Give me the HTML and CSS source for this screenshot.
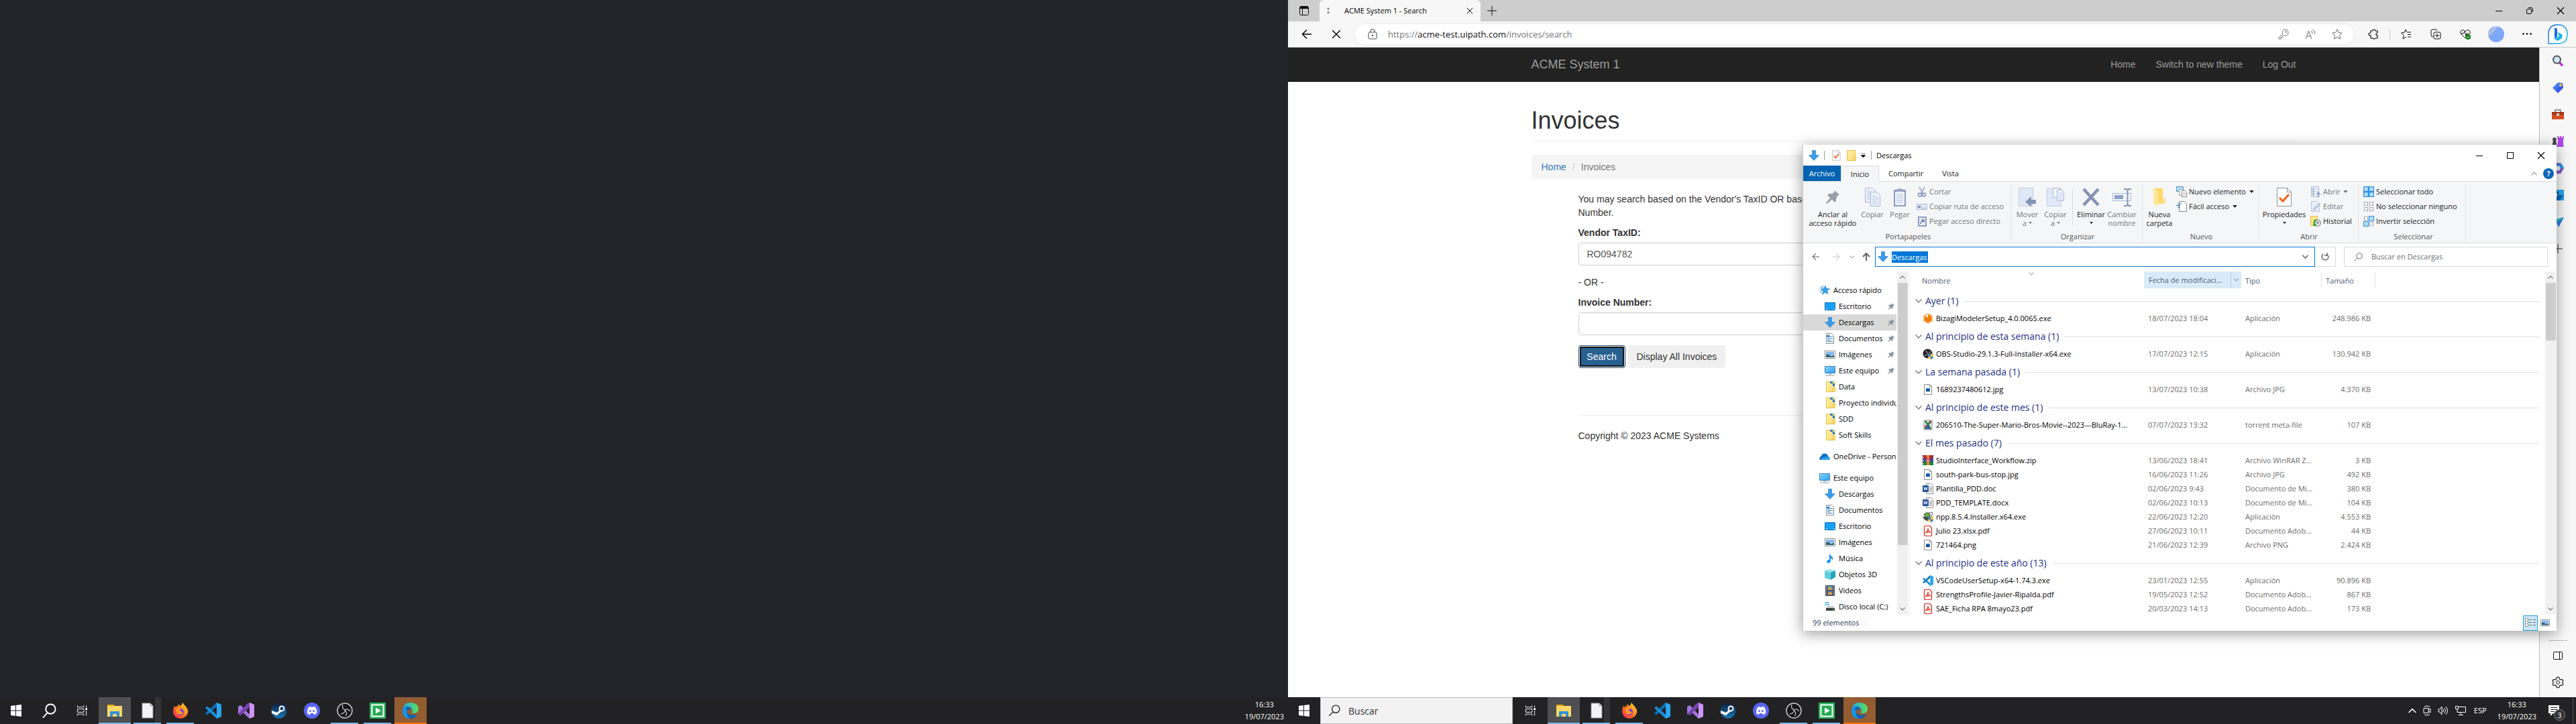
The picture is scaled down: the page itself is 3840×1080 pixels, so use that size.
FILE: index.html
```html
<!DOCTYPE html>
<html lang="es">
<head>
<meta charset="utf-8">
<title>ACME System 1 - Search</title>
<link rel="stylesheet" href="styles.css">
</head>
<body>
<svg class="sprite" width="0" height="0" aria-hidden="true">
  <defs>
    <linearGradient id="g-fox" x1="1" y1="0" x2="0" y2="1"><stop offset="0" stop-color="#ffe83d"/><stop offset=".5" stop-color="#ff7a1a"/><stop offset="1" stop-color="#f5186c"/></linearGradient>
    <linearGradient id="g-edge" x1="0" y1="0" x2="1" y2="0"><stop offset="0" stop-color="#1ba5e8"/><stop offset="1" stop-color="#5fe05a"/></linearGradient>
    <linearGradient id="g-steam" x1="0" y1="0" x2="0" y2="1"><stop offset="0" stop-color="#111d3c"/><stop offset="1" stop-color="#1479b8"/></linearGradient>
    <linearGradient id="g-bing" x1="0" y1="0" x2="1" y2="1"><stop offset="0" stop-color="#1a5fe0"/><stop offset="1" stop-color="#1fc8e8"/></linearGradient>
    <linearGradient id="g-folder" x1="0" y1="0" x2="1" y2="1"><stop offset="0" stop-color="#fff0a8"/><stop offset="1" stop-color="#ffdb72"/></linearGradient>
    <linearGradient id="g-screen" x1="0" y1="0" x2="1" y2="1"><stop offset="0" stop-color="#8ad8ff"/><stop offset="1" stop-color="#2b9bf0"/></linearGradient>
    <linearGradient id="g-tag" x1="0" y1="0" x2="1" y2="1"><stop offset="0" stop-color="#4fa8ff"/><stop offset="1" stop-color="#2f2be0"/></linearGradient>
  </defs>
  <symbol id="win" viewBox="0 0 16 20"><path fill="#fff" d="M0 3l7-1v7.500H0zM8 1.900L16 1v8.500H8zM0 10.500h7V18l-7-1zM8 10.500h8V19l-8-1z"/></symbol>
  <symbol id="search" viewBox="0 0 24 24"><g fill="none" stroke="currentColor" stroke-width="2"><circle cx="14" cy="9" r="7.500"/><path d="M9 15l-7 7.500"/></g></symbol>
  <symbol id="search-thin" viewBox="0 0 16 16"><g fill="none" stroke="currentColor" stroke-width="1.200"><circle cx="10" cy="6" r="5"/><path d="M6.500 9.500L1 15"/></g></symbol>
  <symbol id="taskview" viewBox="0 0 18 16"><g fill="none" stroke="#fff" stroke-width="1"><path d="M1.500 0v2.500h10V0M1.500 16v-2.500h10V16M1.500 5.500h10v5h-10zM15.500 0v3M15.500 8v8"/><path d="M14 4h3v3h-3z" fill="#fff" stroke="none"/></g></symbol>
  <symbol id="explorer" viewBox="0 0 24 24"><path d="M1 3h10l1 2v3H1z" fill="#e0a008"/><path d="M1 5h22v16H1z" fill="#ffd766"/><path d="M5 21v-7q0-1 1-1h12q1 0 1 1v7h-4v-4H9v4z" fill="#2f8fdc"/></symbol>
  <symbol id="doc" viewBox="0 0 24 24"><path d="M4 1h12l4 4v18H4z" fill="#f4f4f6" stroke="#999"/><path d="M16 1v4h4" fill="#ddd" stroke="#999"/></symbol>
  <symbol id="firefox" viewBox="0 0 24 24"><path fill="url(#g-fox)" d="M3 5l2 2q1-2 4-2l-1-3 4 3q2-1 3-5 2 3 5 6 4 5 3 9-2 8-11 9Q2 23 1 14q0-5 2-9z"/><circle cx="12" cy="14" r="5" fill="#7b3fe0"/><path d="M6 10q3-3 7-1-2 1-2 3l5 3q-3 4-8 2-4-3-2-7z" fill="#ff9a1f"/></symbol>
  <symbol id="vscode" viewBox="0 0 24 24"><path d="M17 0l7 3v18l-7 3z" fill="#2ba6ee"/><path d="M17 0v6L3 18.500 0 16z" fill="#0b70b7"/><path d="M17 24v-6L3 5.500 0 8z" fill="#168fd8"/></symbol>
  <symbol id="vs" viewBox="0 0 24 24"><path d="M0 6l4-2 14 15-1 5L4 12v6l-4-1z" fill="#a475dc"/><path d="M17 0v7L4 19l-4-2L13 2z" fill="#7443ab"/><path d="M17 0l7 3v18l-7 3z" fill="#cd95f8"/></symbol>
  <symbol id="steam" viewBox="0 0 24 24"><circle cx="12" cy="12" r="11.500" fill="url(#g-steam)"/><circle cx="16" cy="9" r="3.500" fill="none" stroke="#fff" stroke-width="2"/><path d="M1 12l8 3 4-4 3 2-5 4q-2 4-5 1l-5-2z" fill="#fff"/></symbol>
  <symbol id="discord" viewBox="0 0 24 24"><circle cx="12" cy="12" r="12" fill="#5865f2"/><path fill="#fff" d="M7 7q2-1 3-1l1 1h2l1-1q2 0 3 1 3 4 2 9-2 2-4 2l-1-2H10l-1 2q-2 0-4-2-.500-5 2-9z"/><circle cx="9.500" cy="12.500" r="1.500" fill="#5865f2"/><circle cx="14.500" cy="12.500" r="1.500" fill="#5865f2"/></symbol>
  <symbol id="obs" viewBox="0 0 24 24"><circle cx="12" cy="12" r="11" fill="#161618" stroke="#c8c8c8" stroke-width="1.500"/><g fill="none" stroke="#bbb" stroke-width="1.300"><path d="M9 3q-2 5 3 8 4-3 8 2"/><path d="M12 11q1 5-6 6"/><path d="M13 20q4-4-1-9"/></g></symbol>
  <symbol id="green" viewBox="0 0 24 24"><path d="M0 0h24v24H0z" fill="#27b35a"/><path d="M3.500 3.500h17v17h-17z" fill="#25a952" stroke="#fff" stroke-width="2"/><path d="M9 7.500l8 4.500-8 4.500z" fill="#fff"/></symbol>
  <symbol id="edge" viewBox="0 0 24 24"><path d="M0 12Q1 0 12 0q12 1 12 10-1 6-7 6-4 0-3-2 2-3-1-5-4-3-9 0z" fill="url(#g-edge)"/><path d="M0 12q1-6 7-6 5 0 7 4-5-2-7 3 0 8 15 5-4 6-10 6Q0 23 0 12z" fill="#0c62b8"/><path d="M7 13q-2 6 4 11Q0 24 0 12q1-5 7-6Q3 8 7 13z" fill="#1c93e0"/></symbol>

  <symbol id="down" viewBox="0 0 16 16"><path d="M5.500.500h5v7h5L8 15.500.500 7.500h5z" fill="#3a9bea" stroke="#1b77c4" stroke-width=".6"/></symbol>
  <symbol id="desk" viewBox="0 0 16 16"><path d="M.500 2.500h15v11H.500z" fill="#15a0f8" stroke="#0c6fb6"/><path d="M2 12h2M13 12h2" stroke="#fff"/></symbol>
  <symbol id="docs" viewBox="0 0 16 16"><path d="M2.500.500h8l3 3v12h-11z" fill="#fff" stroke="#8a8a8a"/><path d="M4 3h3v3H4zM8 5.500h4M4 8.500h8M4 10.500h4M4 12.500h8" fill="#2b8de0" stroke="#2b7fc4"/></symbol>
  <symbol id="img" viewBox="0 0 16 16"><path d="M.500 2.500h15v11H.500z" fill="#fff" stroke="#8a8a8a"/><path d="M2 4h12v5H2z" fill="#83b9ea"/><path d="M2 8q4-1 7 2l5-1v3H2z" fill="#2f6170"/></symbol>
  <symbol id="pc" viewBox="0 0 16 16"><path d="M.500 1.500h15v10H.500z" fill="url(#g-screen)" stroke="#3a88bd"/><path d="M6 13h4M1 15h14" stroke="#8d9aa5"/></symbol>
  <symbol id="fold" viewBox="0 0 16 16"><path d="M2.500.500h12v15h-12z" fill="url(#g-folder)" stroke="#e6be49"/><path d="M12.500 10h3v5.500h-3z" fill="#ffe588" stroke="#e6be49"/></symbol>
  <symbol id="foldlink" viewBox="0 0 16 16"><use href="#fold"/><path d="M8 0h4v3H8zM12 3h3v4h-3z" fill="#2979b9"/></symbol>
  <symbol id="quick" viewBox="0 0 16 16"><path d="M9 1l1.500 4.500 5 .2-4 3 1.500 5L9 11l-4.500 3L6 9 2 6l5-.3z" fill="#2ea3ee" stroke="#1472b8" stroke-width=".6"/><path d="M3 2h4M1 4h5M0 9h4M1 11h3" stroke="#3ba7e8"/></symbol>
  <symbol id="cloud" viewBox="0 0 16 16"><path d="M1 13q-2-3 2-6 2-5 7-3 3 1 3 4 4 1 2 5z" fill="#0f6cc8"/><path d="M3 13q0-4 5-4 5-2 8 2-1 2-3 2z" fill="#27a4ec"/></symbol>
  <symbol id="music" viewBox="0 0 16 16"><path d="M7 0q1 4 5 6 1 2-1 5 0-3-2-4v5q-1 3-4 3-3-1-1-4 1-1 3-1z" fill="#1592f2"/></symbol>
  <symbol id="cube" viewBox="0 0 16 16"><path d="M0 2l8-2 8 2-7 3z" fill="#9be7ee"/><path d="M0 2l9 3v11l-9-3z" fill="#5ed0dc"/><path d="M9 5l7-3v10l-7 4z" fill="#27a2b6"/></symbol>
  <symbol id="film" viewBox="0 0 16 16"><path d="M1 0h14v16H1z" fill="#444"/><path d="M4 1h8v6H4z" fill="#5b95d0"/><path d="M4 8h8v7H4z" fill="#4671a8"/><path d="M6 3h3l2 4H5zM6 10h4l1 4H5z" fill="#e4a437"/><path d="M2.500 0v16M13.500 0v16" stroke="#eee" stroke-dasharray="1 1"/></symbol>
  <symbol id="disk" viewBox="0 0 16 16"><path d="M1 1h2v2H1zM4 1h2v2H4zM1 4h2v2H1zM4 4h2v2H4z" fill="#1ba5f0"/><path d="M4 7h9l2 3H2z" fill="#c9ccd0"/><path d="M2 10h13v4H2z" fill="#3c4045"/><path d="M12 12h2" stroke="#5f5"/></symbol>
  <symbol id="pin" viewBox="0 0 16 16"><path d="M10 0l6 5-2 1-2 4v3l-2 1-3-3-6 5-1-1 5-6-3-3 1-2h4l3-2z" fill="currentColor"/></symbol>

  <symbol id="f-biz" viewBox="0 0 16 16"><path d="M8 0l7 4v8l-7 4-7-4V4z" fill="#f7b56b"/><path d="M8 2l5 3v6l-5 3-5-3V5z" fill="#f07d0d"/><path d="M4 4l4 3V2z" fill="#fff"/></symbol>
  <symbol id="shield" viewBox="0 0 8 8"><path d="M0 0h4v4H0z" fill="#3b82d0"/><path d="M4 0h4v4H4zM0 4h4v4Q0 7 0 4z" fill="#f5c332"/><path d="M4 4h4Q8 7 4 8z" fill="#3b82d0"/></symbol>
  <symbol id="f-obs" viewBox="0 0 16 16"><circle cx="7.500" cy="7.500" r="7" fill="#26262a"/><path d="M5 3q1 4 4 4M11 4q1 4-3 5M3 10q3 1 5-2" stroke="#bbb" fill="none"/><use href="#shield" x="8" y="8" width="8" height="8"/></symbol>
  <symbol id="f-img" viewBox="0 0 16 16"><path d="M2.500.500h8l3 3v12h-11z" fill="#fff" stroke="#8a8a8a"/><path d="M10.500.500v3h3" fill="none" stroke="#8a8a8a"/><path d="M5 6h6v5H5z" fill="#2773cd"/><path d="M5 9l3-1 3 3H5z" fill="#123e75"/></symbol>
  <symbol id="f-tor" viewBox="0 0 16 16"><path d="M2 1h12v14H2z" fill="#dce8d8" stroke="#888"/><path d="M4 2q4 5 8 12M12 2Q8 8 4 14" stroke="#19813a" stroke-width="2.500" fill="none"/><path d="M8 5l3 9H5z" fill="#315fc0"/><path d="M3 12l3-4M10 3l3 2" stroke="#d33" stroke-width="2"/></symbol>
  <symbol id="f-zip" viewBox="0 0 16 16"><path d="M0 0h16v5H0z" fill="#a72648"/><path d="M0 5h16v5H0z" fill="#3b4d9d"/><path d="M0 10h16v5H0z" fill="#168442"/><path d="M6 0h4v15H6z" fill="#e98a2c"/><path d="M5 5h6v5H5z" fill="#c03028"/><path d="M6.500 6v3h3V6" stroke="#fff" fill="none"/><path d="M1.500 2v2M1.500 7v2M1.500 12v2" stroke="#f3d648"/></symbol>
  <symbol id="f-doc" viewBox="0 0 16 16"><path d="M5.500.500h7l3 3v12h-10z" fill="#fff" stroke="#8a8a8a"/><path d="M10 5.500h4M10 7.500h4M10 9.500h4M10 11.500h4" stroke="#888"/><path d="M0 3h9v10H0z" fill="#2a569c"/><path d="M2 5.500L3.200 10 4.500 6l1.300 4L7 5.500" stroke="#fff" fill="none"/></symbol>
  <symbol id="f-npp" viewBox="0 0 16 16"><path d="M9 2l6-1-1 6H8z" fill="#eee" stroke="#777"/><path d="M2 5q3-5 8-2 2 4-1 5-4 3-7-3z" fill="#67b83f" stroke="#333"/><path d="M0 8q6-1 11 1l-3 5q-5 0-8-6z" fill="#4b4d49"/><use href="#shield" x="8" y="8" width="8" height="8"/></symbol>
  <symbol id="f-pdf" viewBox="0 0 16 16"><path d="M2.500 2q0-1.500 1.500-1.500h6.500l3 3V14q0 1.500-1.500 1.500H4q-1.500 0-1.500-1.500z" fill="#fff" stroke="#e1251b" stroke-width="1.200"/><path d="M8 4q0 4 4 6-4-1-8 1 4-2 4-7z" fill="none" stroke="#e1251b" stroke-width="1.200"/></symbol>

  <symbol id="r-copy" viewBox="0 0 28 28"><g fill="#eef3fb" stroke="#a9b8d4"><path d="M3.500.500h11l4 4v17h-15z"/><path d="M11.500 6.500h9l5 5v16h-14z"/></g><path d="M6 5h6M6 8h5M6 11h5M6 14h5M6 17h5M14 12h5M14 15h9M14 18h9M14 21h9M14 24h9" stroke="#b3c2dc"/></symbol>
  <symbol id="r-paste" viewBox="0 0 28 28"><path d="M5 3h18v25H5z" fill="#8a9cc0"/><path d="M7 6h14v20H7z" fill="#eef3fb"/><path d="M9 2h3q2-3 4 0h3v4H9z" fill="#9ba9c4"/><path d="M9 10h10M9 13h10M9 16h10M9 19h10M9 22h10" stroke="#b3c2dc"/></symbol>
  <symbol id="r-move" viewBox="0 0 28 28"><path d="M1.500.500h21v27h-21z" fill="#dfe8f6" stroke="#c2d0e6"/><path d="M20 13v5h7v6h-7v5l-9-8z" fill="#8494b6"/></symbol>
  <symbol id="r-copyto" viewBox="0 0 28 28"><path d="M1.500 1.500h21v26h-21z" fill="#dfe8f6" stroke="#c2d0e6"/><g fill="#f2f6fc" stroke="#a9b8d4"><path d="M10.500.500h10v14h-10z"/><path d="M16.500 3.500h7l3 3v13h-10z"/></g><path d="M18 8h7M18 11h7M18 14h7M18 17h7" stroke="#b3c2dc"/></symbol>
  <symbol id="r-del" viewBox="0 0 26 28"><path d="M2 2l22 24M24 2L2 26" stroke="#8193b5" stroke-width="4.500"/></symbol>
  <symbol id="r-ren" viewBox="0 0 28 28"><path d="M.500 8.500h27v11H.500z" fill="#f2f6fc" stroke="#a9b8d4"/><path d="M3 11h13v6H3z" fill="#8ea2c8"/><path d="M17 2h4l1.500 2L24 2h4M22.500 3v22M17 27h4l1.500-2 1.500 2h4" fill="none" stroke="#8193b5" stroke-width="2"/></symbol>
  <symbol id="r-fold" viewBox="0 0 24 28"><path d="M3 1h14v23H3z" fill="#ffd869"/><path d="M3 1l7 4v23l-7-4z" fill="#ffe799"/><path d="M16 16h5v8h-5z" fill="#ffe08a"/></symbol>
  <symbol id="r-prop" viewBox="0 0 24 28"><path d="M1.500.500h15l6 6v21h-21z" fill="#fff" stroke="#8f8f8f"/><path d="M16.500.500v6h6" fill="none" stroke="#8f8f8f"/><path d="M5 15l5 5 9-10" fill="none" stroke="#f26018" stroke-width="3"/></symbol>
  <symbol id="s-cut" viewBox="0 0 16 16"><path d="M4 1l5 9M12 1l-5 9" stroke="#a5b3cc" stroke-width="2"/><g fill="none" stroke="#7f92b5" stroke-width="1.500"><circle cx="5" cy="12.500" r="2.500"/><circle cx="11" cy="12.500" r="2.500"/></g></symbol>
  <symbol id="s-path" viewBox="0 0 16 16"><path d="M.500 4.500h15v8H.500z" fill="#dfe8f6" stroke="#a9b8d4"/><path d="M2 7l1 3 1-3 1 3 1-3M8 10.500h1M10 10.500h1M12 10.500h1" stroke="#6b7fa6" fill="none"/></symbol>
  <symbol id="s-link" viewBox="0 0 16 16"><path d="M2 1h13v15H2z" fill="#8a9cc0"/><path d="M4 3h9v11H4z" fill="#eef3fb"/><path d="M6 12q0-4 4-4M7 6h4v4" stroke="#5f76a5" stroke-width="1.500" fill="none"/></symbol>
  <symbol id="s-new" viewBox="0 0 16 16"><path d="M.500.500h10v7H.500z" fill="#b8e1f8" stroke="#4b8fbe"/><path d="M4.500 4.500h6v9h-6z" fill="#fff" stroke="#999"/><path d="M8.500 6.500h5l2 2v7h-7z" fill="#fff" stroke="#888"/><path d="M10 10h4M10 12h4" stroke="#d59b95"/></symbol>
  <symbol id="s-easy" viewBox="0 0 16 16"><path d="M4.500.500h8l3 3v12h-11z" fill="#fff" stroke="#888"/><path d="M2 4h6M0 6.500h6M2 9h4" stroke="#2b6ca3" stroke-width="1.200"/></symbol>
  <symbol id="s-open" viewBox="0 0 16 16"><path d="M1.500.500h11v15h-11z" fill="#f2f6fc" stroke="#a9b8d4"/><path d="M3 3h3v2H3zM3 7h3v2H3zM3 11h3v2H3zM8 4h3M8 8h3" fill="#a5b6d6" stroke="#a5b6d6"/><path d="M11 16v-4H8l4-4 4 4h-3v4z" fill="#8f9fc0"/></symbol>
  <symbol id="s-edit" viewBox="0 0 16 16"><path d="M1.500.500h8l4 4v11h-12z" fill="#e7eef9" stroke="#b6c4dc"/><path d="M15 4l-9 9-2 1 1-3 9-8z" fill="#c9d5ea" stroke="#a4b4d2"/></symbol>
  <symbol id="s-hist" viewBox="0 0 16 16"><path d="M.500.500h10v14H.500z" fill="#ffe588" stroke="#e6be49"/><circle cx="10.500" cy="10.500" r="5" fill="#ddd" stroke="#777"/><path d="M10 8v3l3-1" stroke="#555" fill="none"/><path d="M8 5q-5 2-3 8l-2 0 4 3 2-4-2 0q-1-3 2-5z" fill="#27a43b"/></symbol>
  <symbol id="s-all" viewBox="0 0 16 16"><path d="M.500.500h7v7h-7zM8.500.500h7v7h-7zM.500 8.500h7v7h-7zM8.500 8.500h7v7h-7z" fill="#b5dfff" stroke="#2c93dd" stroke-width="1.500"/></symbol>
  <symbol id="s-none" viewBox="0 0 16 16"><path d="M1.500 1.500h5v5h-5zM9.500 1.500h5v5h-5zM1.500 9.500h5v5h-5zM9.500 9.500h5v5h-5z" fill="#fff" stroke="#aaa" stroke-width="1.200"/></symbol>
  <symbol id="s-inv" viewBox="0 0 16 16"><path d="M1.500 1.500h5v5h-5zM9.500 9.500h5v5h-5z" fill="#fff" stroke="#aaa" stroke-width="1.200"/><path d="M8.500.500h7v7h-7zM.500 8.500h7v7h-7z" fill="#b5dfff" stroke="#2c93dd" stroke-width="1.200"/></symbol>

  <symbol id="chev" viewBox="0 0 10 6"><path d="M.500.500L5 5 9.500.500" fill="none" stroke="currentColor" stroke-width="1.300"/></symbol>
  <symbol id="chevup" viewBox="0 0 10 6"><path d="M.500 5.500L5 1l4.500 4.500" fill="none" stroke="currentColor" stroke-width="1.300"/></symbol>
  <symbol id="tri" viewBox="0 0 5 3"><path d="M0 0h5L2.500 3z" fill="currentColor"/></symbol>
  <symbol id="x" viewBox="0 0 12 12"><path d="M1 1l10 10M11 1L1 11" stroke="currentColor" stroke-width="1.200"/></symbol>
  <symbol id="arrow" viewBox="0 0 16 16"><path d="M15 8H2M8 1.500L1.500 8 8 14.500" fill="none" stroke="currentColor" stroke-width="1.500"/></symbol>
  <symbol id="star" viewBox="0 0 16 16"><path d="M8 .800l2.200 4.700 5 .7-3.600 3.600.900 5.200L8 12.500 3.500 15l.900-5.200L.800 6.200l5-.7z" fill="none" stroke="currentColor"/></symbol>
</svg>

<div class="screens">
  <section class="screen screen-left">
    <div class="wallpaper"></div>
    <footer class="taskbar">
      <nav class="apps" aria-label="Barra de tareas secundaria">
        <button class="task start" aria-label="Inicio"><svg><use href="#win"/></svg></button>
        <button class="task find" aria-label="Buscar"><svg><use href="#search"/></svg></button>
        <button class="task view" aria-label="Vista de tareas"><svg><use href="#taskview"/></svg></button>
        <button class="task on" aria-label="Explorador"><svg><use href="#explorer"/></svg></button>
        <button class="task run many" aria-label="Documento"><svg><use href="#doc"/></svg></button>
        <button class="task run" aria-label="Firefox"><svg><use href="#firefox"/></svg></button>
        <button class="task" aria-label="Visual Studio Code"><svg><use href="#vscode"/></svg></button>
        <button class="task" aria-label="Visual Studio"><svg><use href="#vs"/></svg></button>
        <button class="task" aria-label="Steam"><svg><use href="#steam"/></svg></button>
        <button class="task" aria-label="Discord"><svg><use href="#discord"/></svg></button>
        <button class="task run" aria-label="OBS Studio"><svg><use href="#obs"/></svg></button>
        <button class="task run" aria-label="Grabadora"><svg><use href="#green"/></svg></button>
        <button class="task alert" aria-label="Edge"><svg><use href="#edge"/></svg></button>
      </nav>
      <div class="tray tray-left"><div class="clock"><span>16:33</span><span>19/07/2023</span></div></div>
    </footer>
  </section>

  <section class="screen">
    <div class="browser">
      <header class="tabstrip">
        <button class="tabmenu" aria-label="Menú de pestañas"><svg width="14" height="14" viewBox="0 0 14 14"><rect x=".5" y=".5" width="13" height="13" rx="2" fill="none" stroke="#111"/><path d="M1 1h12v3H1z"/><path d="M4.500 4v9" stroke="#111"/></svg></button>
        <div class="tab"><svg class="loading" width="4" height="10" viewBox="0 0 4 10"><circle cx="2" cy="2" r="1.500" fill="#777"/><circle cx="2" cy="7.500" r="1.500" fill="#777"/></svg><span class="tabname">ACME System 1 - Search</span><button aria-label="Cerrar pestaña"><svg width="10" height="10"><use href="#x"/></svg></button></div>
        <button class="newtab" aria-label="Nueva pestaña"><svg width="14" height="14" viewBox="0 0 14 14"><path d="M7 0v14M0 7h14" stroke="#111"/></svg></button>
        <div class="wincontrols">
          <button aria-label="Minimizar"><svg width="10" height="10" viewBox="0 0 10 10"><path d="M0 5.500h10" stroke="#000"/></svg></button>
          <button aria-label="Restaurar"><svg width="10" height="10" viewBox="0 0 10 10"><rect x=".5" y="2.500" width="7" height="7" rx="1.500" fill="none" stroke="#000"/><path d="M3 .5h4q2.500 0 2.500 2.500v4" fill="none" stroke="#000"/></svg></button>
          <button aria-label="Cerrar"><svg width="12" height="12"><use href="#x"/></svg></button>
        </div>
      </header>
      <div class="toolbar">
        <button class="navbtn" aria-label="Atrás"><svg width="18" height="16"><use href="#arrow"/></svg></button>
        <button class="navbtn" aria-label="Detener"><svg width="14" height="14"><use href="#x"/></svg></button>
        <div class="omnibox">
          <svg width="14" height="16" viewBox="0 0 14 16"><rect x="1" y="5" width="12" height="10" rx="1.500" fill="none" stroke="#444"/><path d="M4 5V3q0-2.500 3-2.500T10 3v2" fill="none" stroke="#444"/><circle cx="7" cy="10" r="1"/></svg>
          <span class="url">https://<b>acme-test.uipath.com</b>/invoices/search</span>
          <span class="omniicons">
            <svg width="16" height="16" viewBox="0 0 16 16"><g fill="none" stroke="#777"><path d="M7 8L1 13v2h3v-2h2v-2h2l1-1q6 1 6-4Q15 1 10 1 5 2 7 8z"/><circle cx="11.500" cy="4.500" r="1"/></g></svg>
            <svg width="16" height="16" viewBox="0 0 16 16"><path d="M1 15L5.500 3 10 15M3 11h5M9 3q2 1 2 4M11 1q4 2 4 7" fill="none" stroke="#666"/></svg>
            <svg width="16" height="16" class="grey"><use href="#star"/></svg>
          </span>
        </div>
        <div class="actions">
          <svg width="16" height="16" viewBox="0 0 16 16"><path d="M4 3h3q0-2 2-2t2 2h3v3q-2 0-2 2t2 2v4h-3q0 1-2 1t-2-1H4v-4q-3 0-3-2t3-2z" fill="none" stroke="#111" stroke-width="1.200"/></svg>
          <i></i>
          <svg width="16" height="16" viewBox="0 0 16 16"><path d="M9 5h6M10 8.500h5M10 12h5M8.500 5L7 1 5 5.500.500 6 4 9.500 3 15l5-3" fill="none" stroke="#111"/></svg>
          <svg width="16" height="16" viewBox="0 0 16 16"><path d="M4 12Q1 12 1 9V3q0-2 2-2h5q2 0 2 2" fill="none" stroke="#111"/><rect x="5" y="5" width="10" height="10" rx="2" fill="none" stroke="#111"/><path d="M10 7v6M7 10h6" stroke="#111"/></svg>
          <svg width="16" height="16" viewBox="0 0 16 16"><path d="M8 14L2 8q-3-4 1-6 3-1 5 2 2-3 5-2 4 2 1 6M1 7h4l2-3 2 6 1-3h3" fill="none" stroke="#111"/><circle cx="12" cy="12" r="4" fill="#107c10"/><path d="M10 12l1.500 1.500L14 11" stroke="#fff" fill="none"/></svg>
          <span class="avatar"></span>
          <svg width="16" height="16" viewBox="0 0 16 16"><circle cx="2.500" cy="7.500" r="1.300"/><circle cx="8" cy="7.500" r="1.300"/><circle cx="13.500" cy="7.500" r="1.300"/></svg>
        </div>
        <div class="bing"><svg width="30" height="30" viewBox="0 0 30 30"><path d="M1 29V15Q1 1 15 1t14 14-14 14z" fill="#fff" stroke="url(#g-bing)" stroke-width="1.500"/><path d="M10 5l4 2v12l-4 3z" fill="#1b6ae6"/><path d="M14 12l7 3q2 5-3 8l-4 2-4-3 7-4z" fill="#1db5e6"/></svg></div>
      </div>
      <div class="viewport">
        <main class="page">
          <nav class="navbar">
            <div class="container">
              <a class="brand" href="#">ACME System 1</a>
              <div class="navlinks"><a href="#">Home</a><a href="#">Switch to new theme</a><a href="#">Log Out</a></div>
            </div>
          </nav>
          <div class="container body">
            <h1>Invoices</h1>
            <ol class="crumbs"><li><a href="#">Home</a></li><li>Invoices</li></ol>
            <form class="form">
              <p>You may search based on the Vendor's TaxID OR based on the Invoice Number.</p>
              <label for="tax">Vendor TaxID:</label>
              <input id="tax" type="text" value="RO094782">
              <p class="or">- OR -</p>
              <label for="inv">Invoice Number:</label>
              <input id="inv" type="text">
              <div class="btns"><button type="button" class="primary">Search</button><button type="button" class="plain">Display All Invoices</button></div>
              <hr>
              <p>Copyright © 2023 ACME Systems</p>
            </form>
          </div>
        </main>
        <aside class="sidebar">
          <svg viewBox="0 0 18 18"><path d="M11 11l5 5" stroke="#c02be0" stroke-width="3.500"/><circle cx="7.500" cy="7" r="5.500" fill="#cfeaf8" stroke="#555" stroke-width="2"/></svg>
          <svg viewBox="0 0 18 18"><path d="M1 9l8-8 7 1 1 7-8 8z" fill="url(#g-tag)"/><circle cx="13" cy="5" r="2" fill="#ffc928"/></svg>
          <svg viewBox="0 0 18 18"><path d="M5 5V2h8v3" fill="none" stroke="#777" stroke-width="1.500"/><path d="M0 5h18v11H0z" fill="#d24d20"/><path d="M0 5h18v4H0z" fill="#a63313"/><path d="M7 7h4v4H7z" fill="#ccc"/></svg>
          <svg viewBox="0 0 18 18"><circle cx="4" cy="6" r="3" fill="#555"/><path d="M2 8h4l2 9H0z" fill="#444"/><path d="M8 1h2v2h2V1h2v2h2V1h2l-1 7v5l1 4H8l1-9z" fill="#b146f0"/></svg>
          <svg viewBox="0 0 18 18"><path d="M5 1h8l5 8-5 8H5L0 9z" fill="#8557c4"/><path d="M10 1l5 2 3 6h-6L8 5z" fill="#2895e8"/><circle cx="9" cy="9" r="3.500" fill="#f4f4fa"/></svg>
          <svg viewBox="0 0 18 18"><path d="M5 1h13v16H5z" fill="#28a8ea"/><path d="M5 9h13l-6 8H5z" fill="#1166b8"/><path d="M0 4h10v10H0z" fill="#0b5cad"/><circle cx="5" cy="9" r="2.500" fill="none" stroke="#fff" stroke-width="1.500"/></svg>
          <svg viewBox="0 0 18 18"><path d="M0 7l18-5-8 15-3-7z" fill="#2d7fe0"/><path d="M0 7l18-5L7 10z" fill="#2bc0cf"/></svg>
          <svg viewBox="0 0 18 18"><path d="M9 2v14M2 9h14" stroke="#222"/></svg>
          <i></i>
          <svg viewBox="0 0 18 18"><rect x="2.500" y="3.500" width="13" height="11" rx="1.500" fill="none" stroke="#111"/><path d="M11.500 4v10" stroke="#111"/></svg>
          <svg viewBox="0 0 18 18"><path d="M7 2l2-1 2 1 .500 2 2 1 2-.500 1.500 2-1.500 2.500 1.500 2.500-1.500 2-2-.500-2 1L11 16l-2 1-2-1-.500-2-2-1-2 .500-1.500-2L2.500 9 1 6.500l1.500-2 2 .500 2-1z" fill="none" stroke="#222" stroke-width="1.200"/><circle cx="9" cy="9" r="2.500" fill="none" stroke="#222"/></svg>
        </aside>
      </div>
    </div>

    <section class="explorer" aria-label="Descargas">
      <header class="titlebar">
        <svg width="16" height="16"><use href="#down"/></svg><i></i>
        <svg width="13" height="16"><use href="#r-prop"/></svg>
        <svg width="16" height="16"><use href="#fold"/></svg>
        <svg class="qat" width="7" height="7" viewBox="0 0 7 7"><path d="M0 1h7M0 3.500h7L3.500 7z" stroke="#000" stroke-width=".5"/></svg><i></i>
        <span>Descargas</span>
        <div class="wincontrols">
          <button aria-label="Minimizar"><svg width="10" height="10" viewBox="0 0 10 10"><path d="M0 5.500h10" stroke="#000"/></svg></button>
          <button aria-label="Maximizar"><svg width="10" height="10" viewBox="0 0 10 10"><path d="M.500.500h9v9h-9z" fill="none" stroke="#000"/></svg></button>
          <button aria-label="Cerrar"><svg width="12" height="12"><use href="#x"/></svg></button>
        </div>
      </header>
      <nav class="rtabs">
        <button class="file">Archivo</button><button class="sel">Inicio</button><button>Compartir</button><button>Vista</button>
        <span class="rhelp"><svg width="9" height="6"><use href="#chevup"/></svg><b>?</b></span>
      </nav>
      <div class="ribbon">
        <div class="rgroup g1">
          <div class="ritems">
            <button class="big w80"><svg class="pinbig"><use href="#pin"/></svg>Anclar al<br>acceso rápido</button>
            <button class="big w38 dim"><svg><use href="#r-copy"/></svg>Copiar</button>
            <button class="big w44 dim"><svg><use href="#r-paste"/></svg>Pegar</button>
            <div class="smalls dim">
              <button><svg><use href="#s-cut"/></svg>Cortar</button>
              <button><svg><use href="#s-path"/></svg>Copiar ruta de acceso</button>
              <button><svg><use href="#s-link"/></svg>Pegar acceso directo</button>
            </div>
          </div>
          <span class="rlabel">Portapapeles</span>
        </div>
        <div class="rgroup g2">
          <div class="ritems">
            <button class="big w42 dim"><svg><use href="#r-move"/></svg>Mover<br>a <svg class="tri"><use href="#tri"/></svg></button>
            <button class="big w42 dim"><svg><use href="#r-copyto"/></svg>Copiar<br>a <svg class="tri"><use href="#tri"/></svg></button>
            <i></i>
            <button class="big w46"><svg><use href="#r-del"/></svg>Eliminar<br><svg class="tri"><use href="#tri"/></svg></button>
            <button class="big w46 dim"><svg><use href="#r-ren"/></svg>Cambiar<br>nombre</button>
          </div>
          <span class="rlabel">Organizar</span>
        </div>
        <div class="rgroup g3">
          <div class="ritems">
            <button class="big w44"><svg><use href="#r-fold"/></svg>Nueva<br>carpeta</button>
            <div class="smalls">
              <button><svg><use href="#s-new"/></svg>Nuevo elemento <svg class="tri"><use href="#tri"/></svg></button>
              <button><svg><use href="#s-easy"/></svg>Fácil acceso <svg class="tri"><use href="#tri"/></svg></button>
            </div>
          </div>
          <span class="rlabel">Nuevo</span>
        </div>
        <div class="rgroup g4">
          <div class="ritems">
            <button class="big w72"><svg><use href="#r-prop"/></svg>Propiedades<br><svg class="tri"><use href="#tri"/></svg></button>
            <div class="smalls">
              <button class="dim"><svg><use href="#s-open"/></svg>Abrir <svg class="tri"><use href="#tri"/></svg></button>
              <button class="dim"><svg><use href="#s-edit"/></svg>Editar</button>
              <button><svg><use href="#s-hist"/></svg>Historial</button>
            </div>
          </div>
          <span class="rlabel">Abrir</span>
        </div>
        <div class="rgroup g5">
          <div class="ritems">
            <div class="smalls">
              <button><svg><use href="#s-all"/></svg>Seleccionar todo</button>
              <button><svg><use href="#s-none"/></svg>No seleccionar ninguno</button>
              <button><svg><use href="#s-inv"/></svg>Invertir selección</button>
            </div>
          </div>
          <span class="rlabel">Seleccionar</span>
        </div>
      </div>
      <div class="addressrow">
        <button aria-label="Atrás"><svg width="12" height="12"><use href="#arrow"/></svg></button>
        <button class="off" aria-label="Adelante"><svg width="12" height="12" viewBox="0 0 16 16"><path d="M1 8h13M8 1.500L14.500 8 8 14.500" fill="none" stroke="currentColor" stroke-width="1.500"/></svg></button>
        <button class="recent" aria-label="Recientes"><svg width="7" height="5"><use href="#chev"/></svg></button>
        <button class="up" aria-label="Subir"><svg width="12" height="14" viewBox="0 0 12 14"><path d="M6 13V2M1 7l5-5 5 5" fill="none" stroke="currentColor" stroke-width="2"/></svg></button>
        <div class="address"><svg width="16" height="16"><use href="#down"/></svg><input type="text" value="Descargas" aria-label="Dirección"><svg class="drop" width="9" height="6"><use href="#chev"/></svg></div>
        <button class="reload" aria-label="Actualizar"><svg width="12" height="12" viewBox="0 0 12 12"><path d="M3 2q-3 3-1 7 4 3 7 1 4-4 0-7M9 0v4H5" fill="none" stroke="#666" stroke-width="1.500"/></svg></button>
        <div class="searchbox"><svg width="13" height="13"><use href="#search-thin"/></svg><input type="text" placeholder="Buscar en Descargas" aria-label="Buscar en Descargas"></div>
      </div>
      <div class="panes">
        <ul class="tree">
          <li class="root"><svg><use href="#quick"/></svg>Acceso rápido</li>
          <li><svg><use href="#desk"/></svg>Escritorio<svg class="pinned"><use href="#pin"/></svg></li>
          <li class="current"><svg><use href="#down"/></svg>Descargas<svg class="pinned"><use href="#pin"/></svg></li>
          <li><svg><use href="#docs"/></svg>Documentos<svg class="pinned"><use href="#pin"/></svg></li>
          <li><svg><use href="#img"/></svg>Imágenes<svg class="pinned"><use href="#pin"/></svg></li>
          <li><svg><use href="#pc"/></svg>Este equipo<svg class="pinned"><use href="#pin"/></svg></li>
          <li><svg><use href="#foldlink"/></svg>Data</li>
          <li><svg><use href="#foldlink"/></svg>Proyecto individual</li>
          <li><svg><use href="#foldlink"/></svg>SDD</li>
          <li><svg><use href="#foldlink"/></svg>Soft Skills</li>
          <li class="root gap"><svg><use href="#cloud"/></svg>OneDrive - Personal</li>
          <li class="root gap"><svg><use href="#pc"/></svg>Este equipo</li>
          <li><svg><use href="#down"/></svg>Descargas</li>
          <li><svg><use href="#docs"/></svg>Documentos</li>
          <li><svg><use href="#desk"/></svg>Escritorio</li>
          <li><svg><use href="#img"/></svg>Imágenes</li>
          <li><svg><use href="#music"/></svg>Música</li>
          <li><svg><use href="#cube"/></svg>Objetos 3D</li>
          <li><svg><use href="#film"/></svg>Videos</li>
          <li><svg><use href="#disk"/></svg>Disco local (C:)</li>
        </ul>
        <div class="scroll"><svg><use href="#chevup"/></svg><i class="long"></i><svg class="end"><use href="#chev"/></svg></div>
        <div class="list">
          <table>
            <colgroup><col class="c1"><col class="c2"><col class="c3"><col class="c4"><col></colgroup>
            <thead><tr><th>Nombre<svg class="sort" width="8" height="5"><use href="#chev"/></svg></th><th class="hot"><div>Fecha de modificaci...<span><svg width="7" height="5"><use href="#chev"/></svg></span></div></th><th class="line">Tipo</th><th class="line">Tamaño</th><th></th></tr></thead>
            <tbody>
              <tr class="group"><th colspan="5"><div><svg><use href="#chev"/></svg>Ayer (1)</div></th></tr>
              <tr><td><div><svg><use href="#f-biz"/></svg>BizagiModelerSetup_4.0.0065.exe</div></td><td>18/07/2023 18:04</td><td>Aplicación</td><td>248.986 KB</td><td></td></tr>
              <tr class="group"><th colspan="5"><div><svg><use href="#chev"/></svg>Al principio de esta semana (1)</div></th></tr>
              <tr><td><div><svg><use href="#f-obs"/></svg>OBS-Studio-29.1.3-Full-Installer-x64.exe</div></td><td>17/07/2023 12:15</td><td>Aplicación</td><td>130.942 KB</td><td></td></tr>
              <tr class="group"><th colspan="5"><div><svg><use href="#chev"/></svg>La semana pasada (1)</div></th></tr>
              <tr><td><div><svg><use href="#f-img"/></svg>1689237480612.jpg</div></td><td>13/07/2023 10:38</td><td>Archivo JPG</td><td>4.370 KB</td><td></td></tr>
              <tr class="group"><th colspan="5"><div><svg><use href="#chev"/></svg>Al principio de este mes (1)</div></th></tr>
              <tr><td><div><svg><use href="#f-tor"/></svg>206510-The-Super-Mario-Bros-Movie--2023---BluRay-1...</div></td><td>07/07/2023 13:32</td><td>torrent meta-file</td><td>107 KB</td><td></td></tr>
              <tr class="group"><th colspan="5"><div><svg><use href="#chev"/></svg>El mes pasado (7)</div></th></tr>
              <tr><td><div><svg><use href="#f-zip"/></svg>StudioInterface_Workflow.zip</div></td><td>13/06/2023 18:41</td><td>Archivo WinRAR Z...</td><td>3 KB</td><td></td></tr>
              <tr><td><div><svg><use href="#f-img"/></svg>south-park-bus-stop.jpg</div></td><td>16/06/2023 11:26</td><td>Archivo JPG</td><td>492 KB</td><td></td></tr>
              <tr><td><div><svg><use href="#f-doc"/></svg>Plantilla_PDD.doc</div></td><td>02/06/2023 9:43</td><td>Documento de Mi...</td><td>380 KB</td><td></td></tr>
              <tr><td><div><svg><use href="#f-doc"/></svg>PDD_TEMPLATE.docx</div></td><td>02/06/2023 10:13</td><td>Documento de Mi...</td><td>104 KB</td><td></td></tr>
              <tr><td><div><svg><use href="#f-npp"/></svg>npp.8.5.4.Installer.x64.exe</div></td><td>22/06/2023 12:20</td><td>Aplicación</td><td>4.553 KB</td><td></td></tr>
              <tr><td><div><svg><use href="#f-pdf"/></svg>Julio 23.xlsx.pdf</div></td><td>27/06/2023 10:11</td><td>Documento Adob...</td><td>44 KB</td><td></td></tr>
              <tr><td><div><svg><use href="#f-img"/></svg>721464.png</div></td><td>21/06/2023 12:39</td><td>Archivo PNG</td><td>2.424 KB</td><td></td></tr>
              <tr class="group"><th colspan="5"><div><svg><use href="#chev"/></svg>Al principio de este año (13)</div></th></tr>
              <tr><td><div><svg><use href="#vscode"/></svg>VSCodeUserSetup-x64-1.74.3.exe</div></td><td>23/01/2023 12:55</td><td>Aplicación</td><td>90.896 KB</td><td></td></tr>
              <tr><td><div><svg><use href="#f-pdf"/></svg>StrengthsProfile-Javier-Ripalda.pdf</div></td><td>19/05/2023 12:52</td><td>Documento Adob...</td><td>867 KB</td><td></td></tr>
              <tr><td><div><svg><use href="#f-pdf"/></svg>SAE_Ficha RPA 8mayo23.pdf</div></td><td>20/03/2023 14:13</td><td>Documento Adob...</td><td>173 KB</td><td></td></tr>
            </tbody>
          </table>
        </div>
        <div class="scroll"><svg><use href="#chevup"/></svg><i></i><svg class="end"><use href="#chev"/></svg></div>
      </div>
      <footer class="status"><span>99 elementos</span>
        <button class="details" aria-label="Detalles"><svg width="16" height="14" viewBox="0 0 16 14"><path d="M.500.500h4v4h-4zM.500 4.500h4v4h-4zM.500 8.500h4v4h-4z" fill="#fff" stroke="#999"/><path d="M6 2.500h4M12 2.500h4M6 6.500h4M12 6.500h4M6 10.500h4M12 10.500h4" stroke="#666"/></svg></button>
        <button aria-label="Miniaturas"><svg width="14" height="14"><use href="#img"/></svg></button>
      </footer>
    </section>

    <footer class="taskbar">
      <nav class="apps" aria-label="Barra de tareas">
        <button class="task start" aria-label="Inicio"><svg><use href="#win"/></svg></button>
        <div class="tasksearch"><svg width="18" height="18"><use href="#search-thin"/></svg><input type="text" placeholder="Buscar" aria-label="Buscar en Windows"></div>
        <button class="task view wide" aria-label="Vista de tareas"><svg><use href="#taskview"/></svg></button>
        <button class="task on" aria-label="Explorador"><svg><use href="#explorer"/></svg></button>
        <button class="task run many" aria-label="Documento"><svg><use href="#doc"/></svg></button>
        <button class="task run" aria-label="Firefox"><svg><use href="#firefox"/></svg></button>
        <button class="task" aria-label="Visual Studio Code"><svg><use href="#vscode"/></svg></button>
        <button class="task" aria-label="Visual Studio"><svg><use href="#vs"/></svg></button>
        <button class="task" aria-label="Steam"><svg><use href="#steam"/></svg></button>
        <button class="task" aria-label="Discord"><svg><use href="#discord"/></svg></button>
        <button class="task run" aria-label="OBS Studio"><svg><use href="#obs"/></svg></button>
        <button class="task run" aria-label="Grabadora"><svg><use href="#green"/></svg></button>
        <button class="task alert" aria-label="Edge"><svg><use href="#edge"/></svg></button>
      </nav>
      <div class="tray">
        <svg width="12" height="8"><use href="#chevup"/></svg>
        <svg width="12" height="16" viewBox="0 0 12 16"><path d="M2 2q4-2 8 0M2 14q4 2 8 0M1 4.500h7v7H1zM8 7l3-2v6L8 9" fill="none" stroke="#fff"/></svg>
        <svg width="16" height="14" viewBox="0 0 16 14"><path d="M1 5h2l3-4v12L3 9H1zM8 5q1 2 0 4M10 3q3 4 0 8M12 1q5 6 0 12" fill="none" stroke="#fff"/></svg>
        <svg width="16" height="14" viewBox="0 0 16 14"><path d="M5 1.500h10.500v8H3V5M.500.500h4v4h-4zM8 10v3M5 13.500h7" fill="none" stroke="#fff"/></svg>
        <span class="lang">ESP</span>
        <div class="clock"><span>16:33</span><span>19/07/2023</span></div>
        <div class="notes"><svg width="16" height="16" viewBox="0 0 16 16"><path d="M0 0h16v12H7l-4 4v-4H0z" fill="#fff"/><path d="M3 3.500h10M3 6.500h10M3 9.500h6" stroke="#222"/></svg><b>3</b></div>
      </div>
    </footer>
  </section>
</div>
</body>
</html>
```
FILE: styles.css
```css
* { box-sizing: border-box; }
body { margin: 0; font: 11px/14px "Open Sans", "Noto Sans", sans-serif; color: #000; }
button { border: 0; padding: 0; margin: 0; background: none; font: inherit; color: inherit; }
input { font: inherit; color: inherit; border: 0; padding: 0; min-width: 0; background: none; }
svg { display: block; flex: none; }
a { text-decoration: none; }
ul, ol { list-style: none; margin: 0; padding: 0; }
.sprite { position: absolute; }

.screens { display: flex; min-height: 100vh; overflow: hidden; }
.screen { flex: 1 1 50%; min-width: 0; display: flex; flex-direction: column; position: relative; }
.wallpaper { flex: 1; background: #24242d; }

/* Taskbar */
.taskbar { display: flex; justify-content: space-between; height: 40px; background: #222224; color: #fff; }
.apps { display: flex; }
.task { width: 41px; margin: 0 4px; display: flex; align-items: center; justify-content: center; border: solid transparent; border-width: 2px 0; }
.task svg { width: 24px; height: 24px; }
.task.start { width: 48px; margin: 0; }
.task.start svg { width: 16px; height: 20px; }
.task.find { width: 50px; margin: 0; }
.task.find svg { width: 23px; height: 23px; }
.task.view { width: 49px; margin: 0; }
.task.view.wide { width: 52px; }
.task.view svg { width: 17px; height: 16px; }
.task.on { width: 48px; margin: 0; background: #4f4f51; border-bottom-color: #76b9ed; }
.task.run { border-bottom-color: #76b9ed; }
.task.many { background: linear-gradient(90deg, transparent 32px, #343436 32px); }
.task.alert { width: 48px; margin: 0 0 0 1px; background: #935c31; border-bottom-color: #ff7300; }
.tasksearch { width: 287px; display: flex; align-items: center; gap: 12px; padding: 0 11px; background: #f2f2f2; border: 1px solid #bbb; color: #222; }
.tasksearch input { flex: 1; font-size: 14px; }
.tasksearch input::placeholder { color: #333; opacity: 1; }
.tray { display: flex; align-items: center; gap: 10px; padding-right: 4px; }
.tray-left { padding-right: 6px; }
.clock { display: flex; flex-direction: column; text-align: center; line-height: 18px; }
.lang { margin: 0 6px 0 2px; }
.notes { position: relative; width: 45px; padding-left: 8px; height: 100%; padding-top: 12px; border-right: 1px solid #555; }
.notes b { position: absolute; left: 16px; top: 18px; width: 17px; height: 17px; border-radius: 50%; border: 1px solid #888; background: #333; font-weight: 400; text-align: center; line-height: 15px; }

/* Browser frame */
.browser { flex: 1; display: flex; flex-direction: column; background: #fff; }
.tabstrip { display: flex; height: 32px; background: #cdcdcd; font-size: 11px; }
.tabmenu { width: 47px; display: flex; align-items: center; justify-content: center; }
.tab { width: 240px; display: flex; align-items: center; padding: 0 11px; background: #f7f7f7; border-radius: 6px 6px 0 0; }
.tabname { flex: 1; }
.loading { margin-right: 22px; }
.newtab { width: 34px; display: flex; align-items: center; justify-content: center; }
.wincontrols { margin-left: auto; display: flex; align-items: center; }
.wincontrols button { width: 46px; height: 100%; display: flex; align-items: center; justify-content: center; }
.toolbar { display: flex; align-items: center; height: 39px; background: #f7f7f7; border-bottom: 1px solid #c3c9c5; padding: 0 12px 0 19px; }
.navbtn { width: 44px; }
.navbtn + .navbtn { padding-left: 2px; width: 37px; }
.omnibox { flex: 1; height: 30px; display: flex; align-items: center; padding: 0 17px 0 19px; background: #fff; border-radius: 15px; box-shadow: 0 0 3px #ddd; }
.url { flex: 1; margin-left: 16px; font-size: 13px; color: #767676; }
.url b { font-weight: 400; color: #111; }
.omniicons { display: flex; gap: 24px; }
.grey { color: #666; }
.actions { display: flex; align-items: center; gap: 28px; margin: 0 23px 0 21px; }
.actions i { width: 1px; height: 16px; background: #ccc; margin: 0 -12px; }
.actions .avatar { margin: 0 -2px; width: 24px; height: 24px; border-radius: 50%; background: linear-gradient(135deg, #8ab0ff 20%, #c4cbd6 26%, #7fa8f8 38%); }
.viewport { flex: 1; display: flex; }
.page { flex: 1; font: 14px/20px "Liberation Sans", Arial, sans-serif; color: #333; }
.sidebar { width: 55px; display: flex; flex-direction: column; align-items: center; gap: 22px; padding: 11px 0 13px; background: #f7f7f7; border-left: 1px solid #bbb; }
.sidebar svg { width: 18px; height: 18px; }
.sidebar i { width: 28px; height: 1px; margin-top: auto; margin-bottom: -9px; background: #bbb; }

/* ACME page */
.container { max-width: 1170px; margin: 0 auto; padding: 0 15px; }
.navbar { background: #222; border-bottom: 1px solid #080808; }
.navbar .container { display: flex; height: 50px; align-items: center; justify-content: space-between; }
.navbar a { color: #9d9d9d; }
.navbar .brand { font-size: 18px; }
.navlinks { display: flex; gap: 30px; }
.page h1 { margin: 38px 0 20px; padding-bottom: 10px; border-bottom: 1px solid #eee; font-size: 36px; line-height: 40px; font-weight: 400; }
.crumbs { display: flex; padding: 8px 15px; background: #f5f5f5; border-radius: 4px; color: #777; }
.crumbs a { color: #337ab7; }
.crumbs li + li::before { content: "/"; padding: 0 9px; color: #ccc; }
.form { width: 470px; margin: 20px 0 0 70px; }
.form p { margin: 0 0 10px; }
.form label { display: block; font-weight: 700; margin-bottom: 5px; }
.form input { display: block; width: 100%; height: 34px; padding: 0 12px; border: 1px solid #ccc; border-radius: 4px; color: #555; background: #fff; }
.form .or { margin: 15px 0 10px; }
.btns { display: flex; gap: 4px; margin-top: 15px; }
.btns button { height: 34px; padding: 0 13px; border-radius: 4px; }
.btns .primary { width: 70px; background: #286090; color: #fff; border: 1px solid #204d74; box-shadow: inset 0 0 0 1px #fff, inset 0 0 0 3px #101010; padding: 0; }
.btns .plain { background: #f0f0f0; color: #333; }
.form hr { border: 0; border-top: 1px solid #eee; margin: 70px 0 20px; }

/* Explorer window */
.explorer { position: absolute; top: 216px; right: 29px; width: 1124px; display: flex; flex-direction: column; background: #fff; border-left: 1px solid #ccc; box-shadow: 0 4px 20px rgba(0, 0, 0, .4); }
.titlebar { display: flex; align-items: center; height: 31px; padding-left: 8px; }
.titlebar i { width: 1px; height: 13px; margin: 0 11px 0 7px; background: #999; }
.titlebar svg + svg { margin-left: 7px; }
.titlebar .qat + i { margin: 0 7px 0 8px; }
.titlebar .wincontrols { align-self: stretch; }
.titlebar .wincontrols svg { margin: 0; }
.rtabs { display: flex; height: 24px; border-bottom: 1px solid #dadbdc; color: #222; }
.rtabs button { padding: 0 14px; height: 23px; }
.rtabs .file { width: 56px; padding: 0; background: #0063b1; color: #fff; }
.rtabs .sel { width: 57px; height: 24px; padding: 0; background: #f5f6f7; border: 1px solid #dadbdc; border-bottom: 0; }
.rhelp { margin-left: auto; display: flex; align-items: center; gap: 9px; padding-right: 4px; color: #999; }
.rhelp b { width: 16px; height: 16px; border-radius: 50%; background: #0a64b8; color: #fff; text-align: center; line-height: 16px; }
.ribbon { display: flex; height: 92px; padding: 4px 0 2px; background: #f5f6f7; border-bottom: 1px solid #dadbdc; color: #222; }
.rgroup { display: flex; flex-direction: column; justify-content: space-between; border-right: 1px solid #e2e3e4; }
.g1 { width: 310px; padding-left: 4px; }
.g2 { width: 196px; padding-left: 3px; }
.g3 { width: 173px; padding-left: 3px; }
.g4 { width: 149px; padding-left: 2px; }
.g5 { width: 160px; padding-left: 4px; }
.ritems { display: flex; }
.ritems i { width: 1px; height: 56px; margin: 6px 4px; background: #dcdde0; }
.big { display: block; text-align: center; line-height: 13px; padding-top: 5px; align-self: flex-start; white-space: nowrap; }
.big > svg { width: 28px; height: 28px; margin: 0 auto 5px; }
.big > .pinbig { padding: 4px; color: #97a0a8; }
.big > .tri, .tri { display: inline-block; width: 5px; height: 3px; margin: 0 0 3px; }
.w80 { width: 80px; }
.w72 { width: 72px; }
.w46 { width: 46px; }
.w44 { width: 44px; }
.w42 { width: 42px; }
.w38 { width: 38px; }
.dim { color: #777; }
.smalls { display: flex; flex-direction: column; margin-left: 3px; }
.smalls button { display: flex; align-items: center; gap: 3px; height: 22px; white-space: nowrap; }
.smalls svg { width: 16px; height: 16px; }
.smalls .tri { width: 7px; height: 4px; margin: 0 0 0 2px; }
.rlabel { text-align: center; color: #555; line-height: 14px; }
.addressrow { display: flex; align-items: center; height: 42px; padding: 5px 13px 7px 4px; color: #666; }
.addressrow button { width: 30px; height: 30px; display: flex; align-items: center; justify-content: center; }
.addressrow .off { color: #ccc; }
.addressrow .recent { width: 16px; }
.addressrow .up { width: 27px; }
.address { flex: 1; display: flex; align-items: center; height: 30px; padding: 0 9px 0 3px; border: 1px solid #0078d7; }
.address input { width: 54px; height: 17px; margin-left: 5px; background: #0078d7; color: #fff; }
.address .drop { margin-left: auto; color: #444; }
.addressrow .reload { width: 31px; border: 1px solid #d9d9d9; border-left: 0; }
.searchbox { display: flex; align-items: center; width: 304px; height: 30px; margin-left: 12px; padding: 0 14px; gap: 13px; border: 1px solid #d9d9d9; }
.searchbox input { flex: 1; }
.searchbox input::placeholder { color: #6d6d6d; opacity: 1; }

.panes { display: flex; height: 512px; padding-right: 1px; overflow: hidden; }
.tree { width: 140px; padding-top: 16px; overflow: hidden; white-space: nowrap; }
.tree li { display: flex; align-items: center; gap: 5px; height: 24px; padding-left: 32px; margin-right: 1px; overflow: hidden; }
.tree li.root { padding-left: 24px; }
.tree li.gap { margin-top: 8px; }
.tree li.current { background: #d9d9d9; }
.tree svg { width: 16px; height: 16px; }
.tree .pinned { width: 10px; height: 10px; margin: 0 3px 0 auto; color: #8d979f; }
.scroll { width: 16px; display: flex; flex-direction: column; align-items: center; background: #f0f0f0; color: #555; }
.scroll svg { width: 8px; height: 17px; }
.scroll i { width: 15px; height: 86px; background: #cdcdcd; }
.scroll i.long { height: 391px; }
.scroll .end { margin-top: auto; }
.list { flex: 1; margin: 0 8px 0 2px; border-left: 1px solid #eee; }
.list table { width: 100%; table-layout: fixed; border-collapse: collapse; }
.c1 { width: 349px; }
.c2 { width: 145px; }
.c3 { width: 120px; }
.c4 { width: 80px; }
.list th, .list td { padding: 0 6px; font-weight: 400; text-align: left; white-space: nowrap; }
.list thead th { height: 27px; color: #4c607a; position: relative; }
.list thead th:first-child { padding-left: 18px; }
.sort { position: absolute; left: 177px; top: 1px; color: #999; }
.list thead .hot { padding: 0; }
.hot div { display: flex; align-items: center; justify-content: space-between; height: 25px; margin-bottom: 2px; padding-left: 7px; background: #d9ebf9; }
.hot span { width: 16px; height: 100%; display: flex; align-items: center; justify-content: center; border-left: 1px solid #b8cfe2; }
.list thead .line { background: linear-gradient(#e2e2e2, #e2e2e2) right 0 top 0 / 1px 25px no-repeat; }
.list td { height: 21px; color: #6d6d6d; }
.list td:first-child { padding-left: 19px; color: #000; }
.list td:nth-child(4) { text-align: right; padding-right: 7px; }
.list td div { display: flex; align-items: center; gap: 4px; }
.list td svg { width: 16px; height: 16px; }
.list .group th { height: 32px; padding: 2px 0 0 8px; font-size: 14px; color: #1e3287; }
.group div { display: flex; align-items: center; gap: 5px; }
.group svg { width: 10px; height: 6px; color: #777; }
.group div::after { content: ""; flex: 1; height: 1px; margin-left: 3px; background: #e2e2e2; }
.status { display: flex; align-items: center; height: 24px; padding: 0 6px 0 14px; color: #1e395b; }
.status span { padding-right: 10px; border-right: 1px solid #eee; margin-right: auto; }
.status button { width: 22px; height: 23px; display: flex; align-items: center; justify-content: center; }
.status .details { background: #cce8f6; border: 1px solid #26a0da; }
```
